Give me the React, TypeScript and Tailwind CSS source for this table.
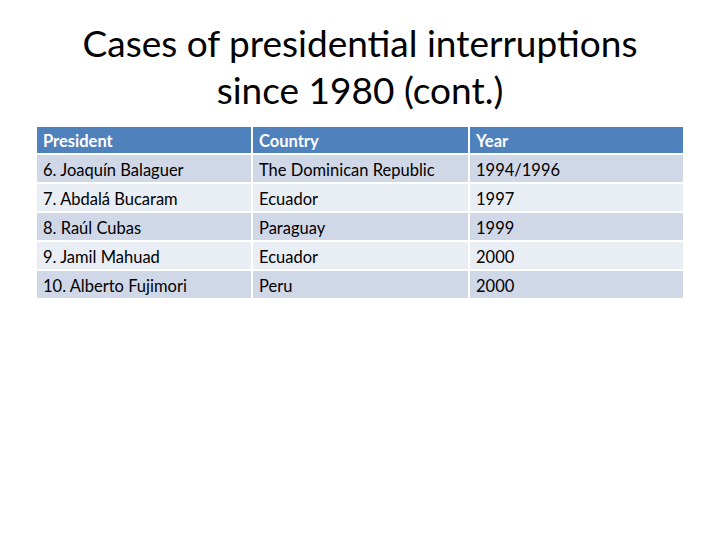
import React from 'react';

const rows = [
  ['6. Joaquín Balaguer', 'The Dominican Republic', '1994/1996'],
  ['7. Abdalá Bucaram', 'Ecuador', '1997'],
  ['8. Raúl Cubas', 'Paraguay', '1999'],
  ['9. Jamil Mahuad', 'Ecuador', '2000'],
  ['10. Alberto Fujimori', 'Peru', '2000'],
];

const App = () => {
  return (
    <div className="w-[720px] h-[540px] bg-white" style={{ fontFamily: 'Lato, "Open Sans", sans-serif' }}>
      {/* Title */}
      <div className="pt-[19px] h-[127px] text-center text-black text-[37px] leading-[47px]">
        <div>Cases of presidential interruptions</div>
        <div>since 1980 (cont.)</div>
      </div>

      {/* Table */}
      <div className="ml-[37px] w-[646px] grid grid-cols-[214px_215px_213px] gap-[2px] text-[16.5px] text-black">
        {['President', 'Country', 'Year'].map((h) => (
          <div key={h} className="h-[26px] pt-[2px] bg-[#4f81bd] text-white font-bold flex items-center pl-[6px]">
            {h}
          </div>
        ))}
        {rows.map((r, i) =>
          r.map((c, j) => (
            <div
              key={`${i}-${j}`}
              className={`h-[27px] pt-[3px] flex items-center pl-[6px] ${i % 2 === 0 ? 'bg-[#d0d8e8]' : 'bg-[#e9edf4]'}`}
            >
              {c}
            </div>
          ))
        )}
      </div>
    </div>
  );
};

export default App;
